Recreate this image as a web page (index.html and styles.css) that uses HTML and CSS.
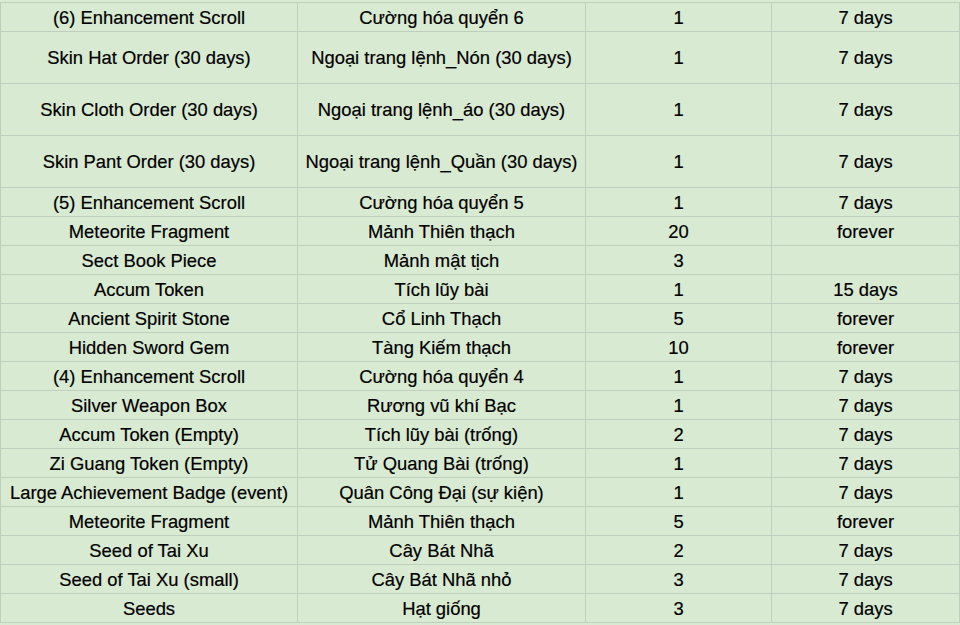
FILE: index.html
```html
<!DOCTYPE html>
<html lang="vi">
<head>
<meta charset="utf-8">
<title>Items</title>
<link rel="stylesheet" href="styles.css">
</head>
<body>
<table class="sheet">
  <colgroup>
    <col class="c1"><col class="c2"><col class="c3"><col class="c4">
  </colgroup>
  <tbody>
    <tr><td>(6) Enhancement Scroll</td><td>Cường hóa quyển 6</td><td>1</td><td>7 days</td></tr>
    <tr class="tall"><td>Skin Hat Order (30 days)</td><td>Ngoại trang lệnh_Nón (30 days)</td><td>1</td><td>7 days</td></tr>
    <tr class="tall"><td>Skin Cloth Order (30 days)</td><td>Ngoại trang lệnh_áo (30 days)</td><td>1</td><td>7 days</td></tr>
    <tr class="tall"><td>Skin Pant Order (30 days)</td><td>Ngoại trang lệnh_Quần (30 days)</td><td>1</td><td>7 days</td></tr>
    <tr><td>(5) Enhancement Scroll</td><td>Cường hóa quyển 5</td><td>1</td><td>7 days</td></tr>
    <tr><td>Meteorite Fragment</td><td>Mảnh Thiên thạch</td><td>20</td><td>forever</td></tr>
    <tr><td>Sect Book Piece</td><td>Mảnh mật tịch</td><td>3</td><td></td></tr>
    <tr><td>Accum Token</td><td>Tích lũy bài</td><td>1</td><td>15 days</td></tr>
    <tr><td>Ancient Spirit Stone</td><td>Cổ Linh Thạch</td><td>5</td><td>forever</td></tr>
    <tr><td>Hidden Sword Gem</td><td>Tàng Kiếm thạch</td><td>10</td><td>forever</td></tr>
    <tr><td>(4) Enhancement Scroll</td><td>Cường hóa quyển 4</td><td>1</td><td>7 days</td></tr>
    <tr><td>Silver Weapon Box</td><td>Rương vũ khí Bạc</td><td>1</td><td>7 days</td></tr>
    <tr><td>Accum Token (Empty)</td><td>Tích lũy bài (trống)</td><td>2</td><td>7 days</td></tr>
    <tr><td>Zi Guang Token (Empty)</td><td>Tử Quang Bài (trống)</td><td>1</td><td>7 days</td></tr>
    <tr><td>Large Achievement Badge (event)</td><td>Quân Công Đại (sự kiện)</td><td>1</td><td>7 days</td></tr>
    <tr><td>Meteorite Fragment</td><td>Mảnh Thiên thạch</td><td>5</td><td>forever</td></tr>
    <tr><td>Seed of Tai Xu</td><td>Cây Bát Nhã</td><td>2</td><td>7 days</td></tr>
    <tr><td>Seed of Tai Xu (small)</td><td>Cây Bát Nhã nhỏ</td><td>3</td><td>7 days</td></tr>
    <tr><td>Seeds</td><td>Hạt giống</td><td>3</td><td>7 days</td></tr>
  </tbody>
</table>
</body>
</html>
```

FILE: styles.css
```css
html, body {
  margin: 0;
  padding: 0;
  background: #d9ead3;
}
body {
  padding-top: 2px;
  width: 960px;
  height: 625px;
  overflow: hidden;
}
.sheet {
  border-collapse: collapse;
  table-layout: fixed;
  width: 959px;
  font-family: "Liberation Sans", Arial, sans-serif;
  font-size: 18.4px;
  color: #000;
  background: #d9ead3;
}
.c1 { width: 297px; }
.c2 { width: 288px; }
.c3 { width: 186px; }
.c4 { width: 188px; }
.sheet td {
  border: 1px solid #c0cebd;
  padding: 2px 0 0 0;
  height: 26px;
  text-align: center;
  vertical-align: middle;
  white-space: nowrap;
  line-height: 20px;
  -webkit-text-stroke: 0.2px #000;
}
.sheet tr.tall td {
  padding-top: 0;
  height: 51px;
}
```
